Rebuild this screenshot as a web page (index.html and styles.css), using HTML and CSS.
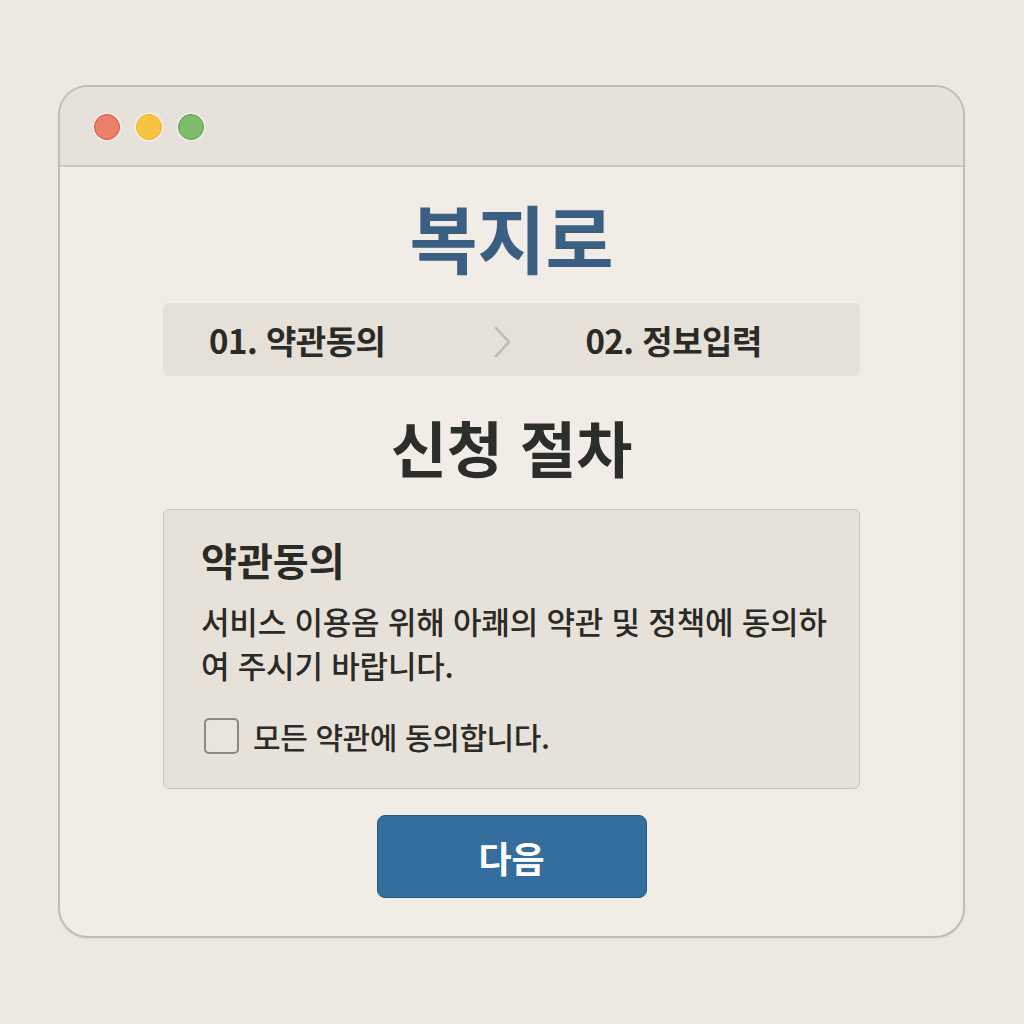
FILE: index.html
```html
<!DOCTYPE html>
<html lang="ko">
<head>
<meta charset="utf-8">
<link rel="stylesheet" href="styles.css">
</head>
<body>
<div class="window">
  <div class="titlebar">
    <span class="dot red"></span>
    <span class="dot yellow"></span>
    <span class="dot green"></span>
  </div>
  <div class="content">
    <h1 class="brand">복지로</h1>
    <div class="steps">
      <span class="step">01. 약관동의</span>
      <svg class="chev" width="22" height="34" viewBox="0 0 22 34"><path d="M4 3 L17 17 L4 31" fill="none" stroke="#bdb8b0" stroke-width="2.5" stroke-linecap="round" stroke-linejoin="round"/></svg>
      <span class="step">02. 정보입력</span>
    </div>
    <h2 class="heading">신청 절차</h2>
    <div class="card">
      <h3 class="card-title">약관동의</h3>
      <p class="card-text">서비스 이용옴 위해 아쾌의 약관 및 정책에 동의하<br>여 주시기 바랍니다.</p>
      <label class="agree"><span class="box"></span><span>모든 약관에 동의합니다.</span></label>
    </div>
    <button class="next">다음</button>
  </div>
</div>
</body>
</html>
```

FILE: styles.css
```css
* { box-sizing: border-box; }
html, body { margin: 0; padding: 0; }
body {
  background: #ede8e0;
  font-family: "Noto Sans CJK KR", "Noto Sans", sans-serif;
  color: #2b2b27;
  height: 1024px;
  overflow: hidden;
}
.window {
  width: 907px;
  height: 853px;
  margin: 85px 0 0 58px;
  border: 2px solid #c2bdb4;
  border-radius: 30px;
  background: #f1ece5;
  overflow: hidden;
  box-shadow: 0 1px 2px rgba(0,0,0,0.05);
}
.titlebar {
  height: 80px;
  background: #e6e1da;
  border-bottom: 2px solid #cdc8bf;
  display: flex;
  align-items: center;
  padding-left: 34px;
  gap: 16px;
  padding-top: 2px;
}
.dot {
  width: 26px;
  height: 26px;
  border-radius: 50%;
  border: 1.5px solid;
  box-shadow: 0 0 0 1.5px #f3f0ea;
}
.red { background: #e8806a; border-color: #dc4d33; }
.yellow { background: #f6c342; border-color: #efb320; }
.green { background: #7fbb6c; border-color: #4fa13f; }
.content {
  display: flex;
  flex-direction: column;
  align-items: center;
}
.brand {
  margin: 32px 0 0;
  font-size: 74px;
  line-height: 1;
  font-weight: 700;
  color: #3a5f82;
  letter-spacing: 0;
}
.steps {
  margin-top: 30px;
  width: 697px;
  height: 73px;
  background: #e5e0d8;
  border-radius: 6px;
  display: flex;
  align-items: center;
  padding-left: 46px;
}
.step {
  font-size: 33px;
  font-weight: 700;
  color: #2a2a26;
  letter-spacing: -0.5px;
}
.chev { margin: 4px 0 0 107px; }
.chev + .step { margin-left: 71px; }
.heading {
  margin: 40px 0 0;
  font-size: 61px;
  line-height: 1;
  font-weight: 700;
  color: #2c2e2a;
}
.card {
  margin-top: 32px;
  width: 697px;
  height: 280px;
  background: #e7e2d9;
  border: 1.5px solid #c9c3b9;
  border-radius: 6px;
  padding: 28px 0 0 37px;
}
.card-title {
  margin: 0;
  font-size: 39px;
  line-height: 1.1;
  font-weight: 700;
  color: #2a2a26;
}
.card-text {
  margin: 18px 0 0;
  font-size: 31px;
  line-height: 44px;
  font-weight: 500;
  color: #2a2a26;
  letter-spacing: -0.2px;
}
.agree {
  display: flex;
  align-items: center;
  gap: 14px;
  margin-top: 27px;
  font-size: 30px;
  font-weight: 500;
  letter-spacing: -0.4px;
}
.box {
  width: 35px;
  height: 36px;
  border: 2px solid #8c8882;
  border-radius: 5px;
  background: #e9e5dd;
  margin-left: 3px;
}
.next {
  margin-top: 26px;
  width: 270px;
  height: 83px;
  background: #346e9e;
  border: 1.5px solid #245b8a;
  border-radius: 8px;
  color: #ffffff;
  font-family: "Noto Sans CJK KR", "Noto Sans", sans-serif;
  font-size: 36px;
  font-weight: 700;
  padding: 0;
}
```
